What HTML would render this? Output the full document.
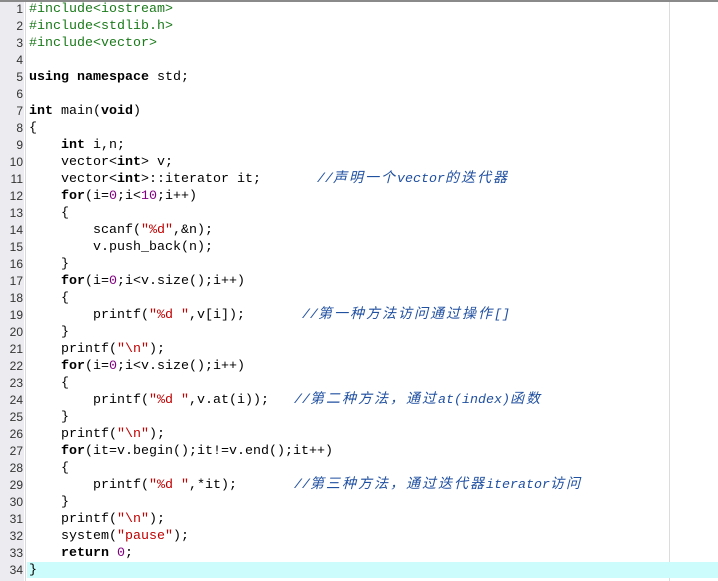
<!DOCTYPE html>
<html><head><meta charset="utf-8"><style>
body{margin:0;width:718px;height:581px;background:#fff;position:relative;overflow:hidden;font-family:"Liberation Mono","Noto Sans CJK SC",monospace;font-size:13.33px;}
.top{position:absolute;left:0;top:0;width:718px;height:2px;background:#8a8a8a}
.gut{position:absolute;left:0;top:2px;width:24px;height:579px;background:#ececf0}
.gl{position:absolute;left:25px;top:2px;width:1px;height:579px;background:#d8d8dc}
.vl{position:absolute;left:669px;top:2px;width:1px;height:579px;background:#dcdcdc}
.hl{position:absolute;left:27px;top:562px;width:691px;height:16px;background:#ccfcfc}
.n{position:absolute;left:0;width:23px;text-align:right;font-family:"Liberation Sans Narrow","Liberation Sans",sans-serif;font-size:12px;color:#333;line-height:17px}
.c{position:absolute;left:29px;white-space:pre;line-height:17px;color:#000}
.k{font-weight:bold}
.p{color:#1a7a1a}
.s{color:#c00000}
.num{color:#800080}
.cm{position:absolute;white-space:pre;line-height:17px;color:#2050a0;font-style:italic}
.z{font-size:14px;letter-spacing:2px}
</style></head><body>
<div class="top"></div><div class="gut"></div><div class="gl"></div><div class="vl"></div><div class="hl"></div>
<div class="n" style="top:1px">1</div><div class="n" style="top:18px">2</div><div class="n" style="top:35px">3</div><div class="n" style="top:52px">4</div><div class="n" style="top:69px">5</div><div class="n" style="top:86px">6</div><div class="n" style="top:103px">7</div><div class="n" style="top:120px">8</div><div class="n" style="top:137px">9</div><div class="n" style="top:154px">10</div><div class="n" style="top:171px">11</div><div class="n" style="top:188px">12</div><div class="n" style="top:205px">13</div><div class="n" style="top:222px">14</div><div class="n" style="top:239px">15</div><div class="n" style="top:256px">16</div><div class="n" style="top:273px">17</div><div class="n" style="top:290px">18</div><div class="n" style="top:307px">19</div><div class="n" style="top:324px">20</div><div class="n" style="top:341px">21</div><div class="n" style="top:358px">22</div><div class="n" style="top:375px">23</div><div class="n" style="top:392px">24</div><div class="n" style="top:409px">25</div><div class="n" style="top:426px">26</div><div class="n" style="top:443px">27</div><div class="n" style="top:460px">28</div><div class="n" style="top:477px">29</div><div class="n" style="top:494px">30</div><div class="n" style="top:511px">31</div><div class="n" style="top:528px">32</div><div class="n" style="top:545px">33</div><div class="n" style="top:562px">34</div>

<div class="c p" style="top:1px">#include&lt;iostream&gt;</div>
<div class="c p" style="top:18px">#include&lt;stdlib.h&gt;</div>
<div class="c p" style="top:35px">#include&lt;vector&gt;</div>
<div class="c" style="top:69px"><span class="k">using</span> <span class="k">namespace</span> std;</div>
<div class="c" style="top:103px"><span class="k">int</span> main(<span class="k">void</span>)</div>
<div class="c" style="top:120px">{</div>
<div class="c" style="top:137px">    <span class="k">int</span> i,n;</div>
<div class="c" style="top:154px">    vector&lt;<span class="k">int</span>&gt; v;</div>
<div class="c" style="top:171px">    vector&lt;<span class="k">int</span>&gt;::iterator it;</div>
<div class="cm" style="top:171px;left:317px">//<span class="z">声明一个</span>vector<span class="z">的迭代器</span></div>
<div class="c" style="top:188px">    <span class="k">for</span>(i=<span class="num">0</span>;i&lt;<span class="num">10</span>;i++)</div>
<div class="c" style="top:205px">    {</div>
<div class="c" style="top:222px">        scanf(<span class="s">"%d"</span>,&amp;n);</div>
<div class="c" style="top:239px">        v.push_back(n);</div>
<div class="c" style="top:256px">    }</div>
<div class="c" style="top:273px">    <span class="k">for</span>(i=<span class="num">0</span>;i&lt;v.size();i++)</div>
<div class="c" style="top:290px">    {</div>
<div class="c" style="top:307px">        printf(<span class="s">"%d "</span>,v[i]);</div>
<div class="cm" style="top:307px;left:302px">//<span class="z">第一种方法访问通过操作</span>[]</div>
<div class="c" style="top:324px">    }</div>
<div class="c" style="top:341px">    printf(<span class="s">"\n"</span>);</div>
<div class="c" style="top:358px">    <span class="k">for</span>(i=<span class="num">0</span>;i&lt;v.size();i++)</div>
<div class="c" style="top:375px">    {</div>
<div class="c" style="top:392px">        printf(<span class="s">"%d "</span>,v.at(i));</div>
<div class="cm" style="top:392px;left:294px">//<span class="z">第二种方法，通过</span>at(index)<span class="z">函数</span></div>
<div class="c" style="top:409px">    }</div>
<div class="c" style="top:426px">    printf(<span class="s">"\n"</span>);</div>
<div class="c" style="top:443px">    <span class="k">for</span>(it=v.begin();it!=v.end();it++)</div>
<div class="c" style="top:460px">    {</div>
<div class="c" style="top:477px">        printf(<span class="s">"%d "</span>,*it);</div>
<div class="cm" style="top:477px;left:294px">//<span class="z">第三种方法，通过迭代器</span>iterator<span class="z">访问</span></div>
<div class="c" style="top:494px">    }</div>
<div class="c" style="top:511px">    printf(<span class="s">"\n"</span>);</div>
<div class="c" style="top:528px">    system(<span class="s">"pause"</span>);</div>
<div class="c" style="top:545px">    <span class="k">return</span> <span class="num">0</span>;</div>
<div class="c" style="top:562px">}</div>
</body></html>
